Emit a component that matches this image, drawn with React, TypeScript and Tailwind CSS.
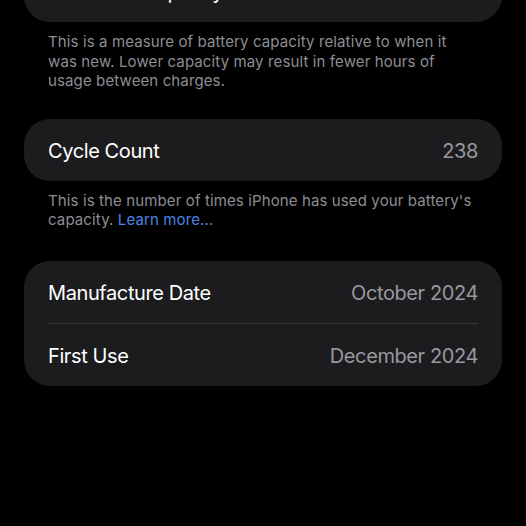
export default function App() {
  return (
    <div
      className="h-[526px] w-[526px] overflow-hidden bg-black"
      style={{ fontFamily: "Inter, 'Noto Sans', sans-serif" }}
    >
      <div className="px-[24px]">
        <div className="-mt-[39px] flex h-[61px] items-center justify-between rounded-[26px] bg-[#1c1c1e] px-[24px] text-[20px] tracking-[-0.4px]">
          <span className="text-white">Maximum Capacity</span>
          <span className="text-[#98989e]">85%</span>
        </div>

        <p className="mt-[10px] px-[24px] text-[15px] leading-[19.5px] tracking-[0.12px] text-[#8d8d93]">
          This is a measure of battery capacity relative to when it
          <br />
          was new. Lower capacity may result in fewer hours of
          <br />
          usage between charges.
        </p>

        <div className="mt-[28px] flex h-[62px] items-center justify-between rounded-[26px] bg-[#1c1c1e] px-[24px] pt-[2px] text-[20px] tracking-[-0.4px]">
          <span className="text-white">Cycle Count</span>
          <span className="text-[#98989e]">238</span>
        </div>

        <p className="mt-[10px] px-[24px] text-[15px] leading-[19.5px] tracking-[0.12px] text-[#8d8d93]">
          This is the number of times iPhone has used your battery's
          <br />
          capacity. <span className="text-[#4f82e6]">Learn more...</span>
        </p>

        <div className="mt-[31px] rounded-[26px] bg-[#1c1c1e] px-[24px] text-[20px] tracking-[-0.4px]">
          <div className="flex h-[62px] items-center justify-between pt-[2px]">
            <span className="text-white">Manufacture Date</span>
            <span className="text-[#98989e]">October 2024</span>
          </div>
          <div className="h-px bg-[#38383a]" />
          <div className="flex h-[62px] items-center justify-between pt-[2px]">
            <span className="text-white">First Use</span>
            <span className="text-[#98989e]">December 2024</span>
          </div>
        </div>
      </div>
    </div>
  );
}
